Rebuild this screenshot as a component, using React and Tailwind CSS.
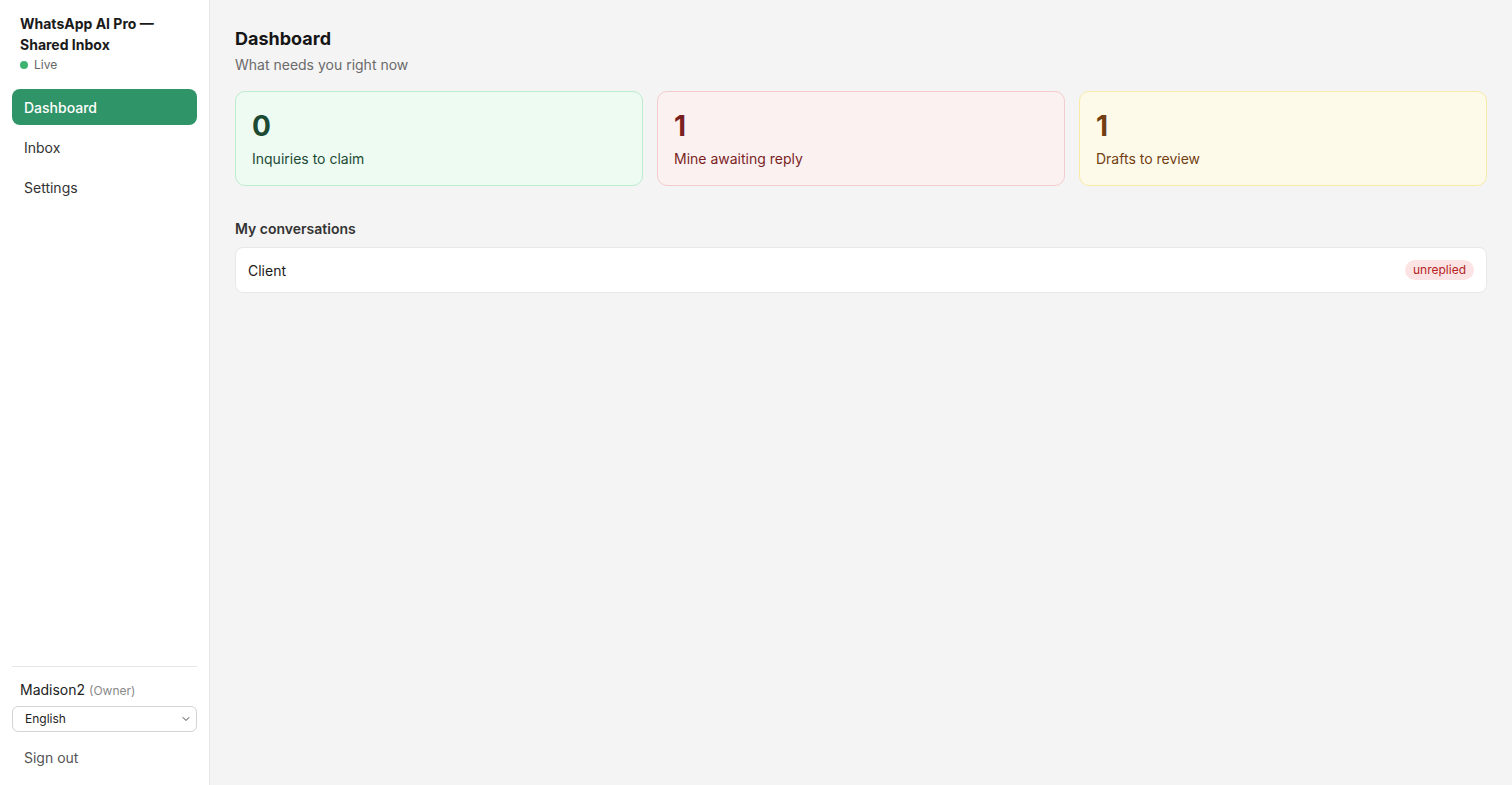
import React from "react";
import { FiChevronDown } from "react-icons/fi";

const stats = [
  { n: 0, label: "Inquiries to claim", box: "bg-[#edfbf3] border-[#bdeccf]", text: "text-[#1c4a33]" },
  { n: 1, label: "Mine awaiting reply", box: "bg-[#fcf1f1] border-[#f3cdcd]", text: "text-[#7a1f1f]" },
  { n: 1, label: "Drafts to review", box: "bg-[#fefaea] border-[#f8eba6]", text: "text-[#713f12]" },
];

function Sidebar() {
  return (
    <aside className="w-[210px] shrink-0 bg-white border-r border-[#e6e6e6] flex flex-col px-3 pt-3 pb-[15px]">
      <div className="px-2 pt-[1px]">
        <div className="text-[14px] leading-[21px] font-bold text-[#1a1a1a]">
          WhatsApp AI Pro — Shared Inbox
        </div>
        <div className="flex items-center gap-[6px] mt-[1px] text-[12px] leading-[18px] text-[#666]">
          <span className="w-2 h-2 rounded-full bg-[#3cb371]" />
          Live
        </div>
      </div>

      <nav className="mt-[15px] flex flex-col gap-1">
        <a className="h-9 flex items-center px-3 rounded-lg bg-[#2f9467] text-white text-[14px] font-medium">
          Dashboard
        </a>
        <a className="h-9 flex items-center px-3 rounded-lg text-[#333] text-[14px]">Inbox</a>
        <a className="h-9 flex items-center px-3 rounded-lg text-[#333] text-[14px]">Settings</a>
      </nav>

      <div className="mt-auto border-t border-[#e6e6e6] pt-[14px]">
        <div className="px-2 text-[14px] leading-[18px] text-[#222]">
          Madison2 <span className="text-[12px] text-[#888]">(Owner)</span>
        </div>
        <div className="relative mt-[5px]">
          <select className="w-full h-[26px] appearance-none rounded-md border border-[#d4d4d4] bg-white pl-3 text-[12px] text-[#222]">
            <option>English</option>
          </select>
          <FiChevronDown className="absolute right-[5px] top-1/2 -translate-y-1/2 w-3 h-3 text-[#444] pointer-events-none" />
        </div>
        <button className="mt-[12px] h-[26px] px-3 text-[14px] text-[#555] text-left">Sign out</button>
      </div>
    </aside>
  );
}

function App() {
  return (
    <div className="flex h-[785px] bg-[#f4f4f4] font-['Inter',sans-serif]">
      <Sidebar />
      <main className="flex-1 px-[25px] pt-[27px]">
        <h1 className="text-[18px] leading-[23px] font-bold text-[#161616]">Dashboard</h1>
        <p className="mt-[5px] text-[14px] leading-[20px] text-[#6b6b6b]">What needs you right now</p>

        <div className="mt-[16px] grid grid-cols-3 gap-[14px]">
          {stats.map((s) => (
            <div key={s.label} className={`h-[95px] rounded-[10px] border px-4 pt-[16px] ${s.box} ${s.text}`}>
              <div className="text-[28px] leading-[36px] font-bold">{s.n}</div>
              <div className="mt-[5px] text-[14px] leading-[20px]">{s.label}</div>
            </div>
          ))}
        </div>

        <h2 className="mt-[33px] text-[14px] leading-[20px] font-semibold text-[#333]">My conversations</h2>
        <div className="mt-[8px] h-[46px] flex items-center justify-between px-3 bg-white border border-[#e8e8e8] rounded-lg">
          <span className="text-[14px] text-[#1a1a1a]">Client</span>
          <span className="px-2 py-[1px] rounded-full bg-[#fce4e4] text-[#b42323] text-[12px]">unreplied</span>
        </div>
      </main>
    </div>
  );
}

export default App;
